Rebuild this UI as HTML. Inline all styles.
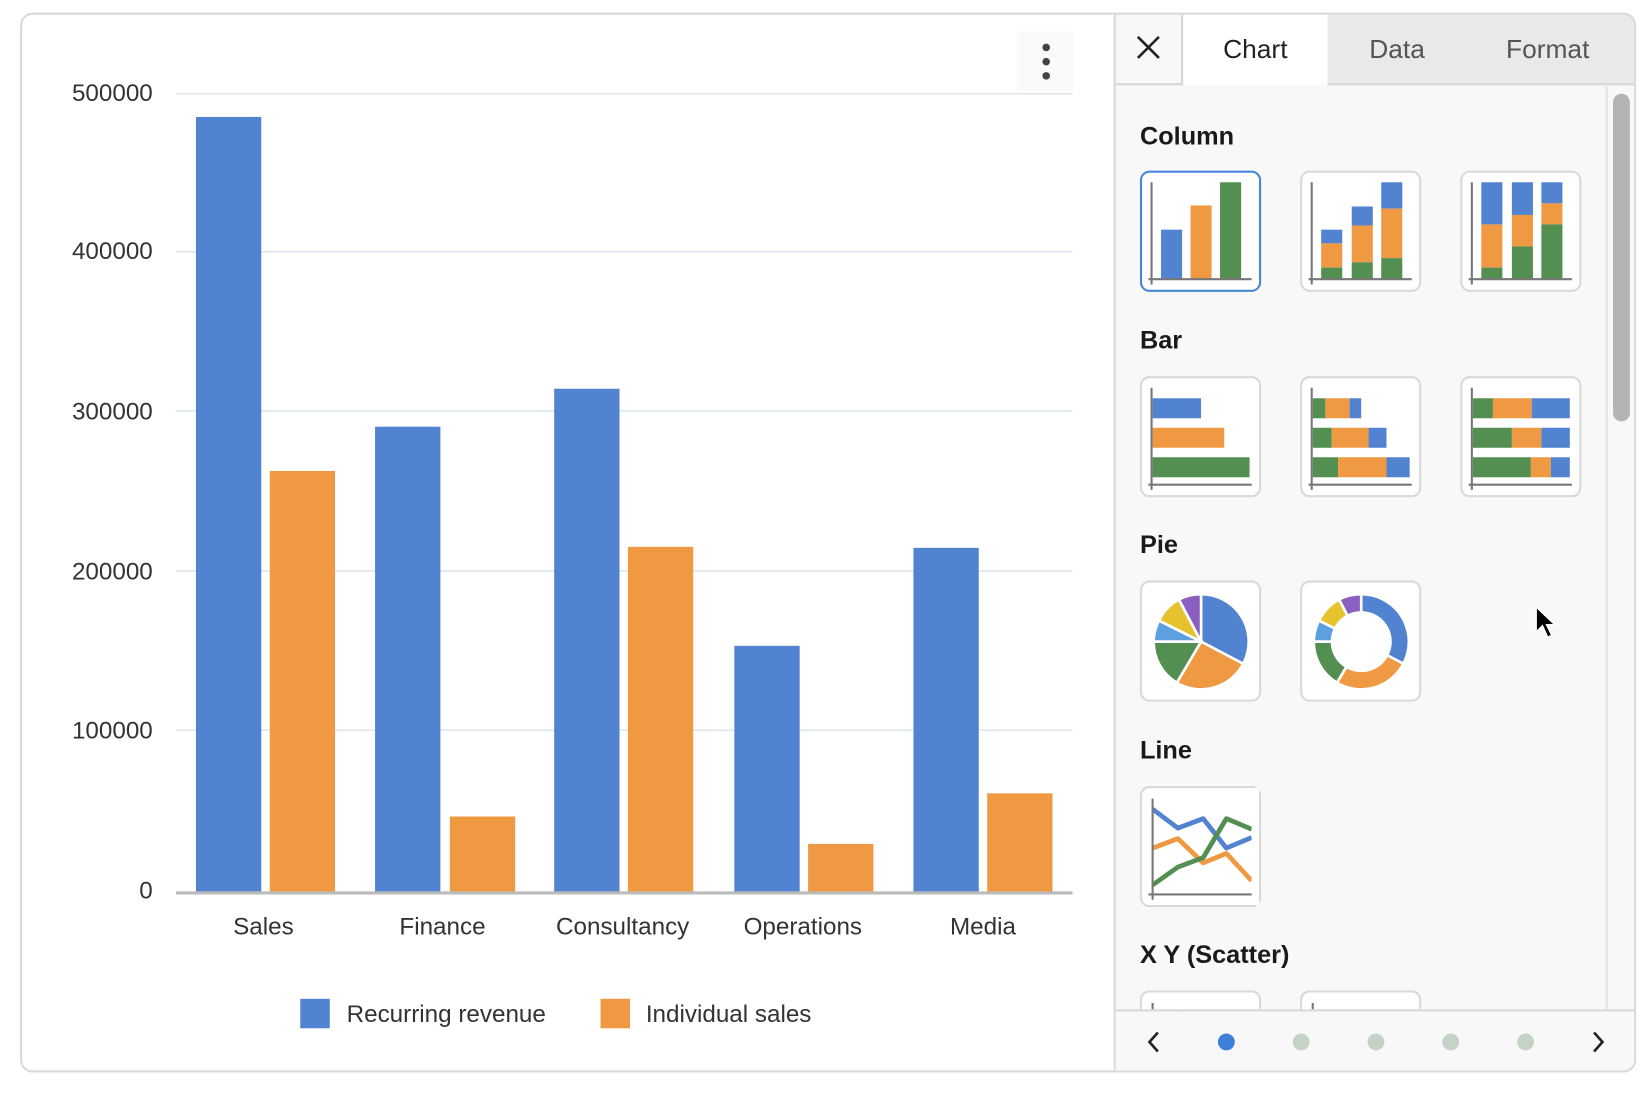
<!DOCTYPE html>
<html><head><meta charset="utf-8"><style>
html,body{margin:0;padding:0;background:#fff;width:1652px;height:1096px;overflow:hidden}
#w{position:absolute;left:0;top:0;width:1568px;height:1040px;transform:scale(1.05357);transform-origin:0 0;font-family:"Liberation Sans",sans-serif}
.card{position:absolute;left:19px;top:12px;width:1530px;height:1002px;border:2px solid #d9d9d9;border-radius:12px;background:#fff;overflow:hidden}
.panel{position:absolute;left:1036px;top:0;width:494px;height:1002px;background:#f8f8f8;border-left:2px solid #d9d9d9}
.tabs{position:absolute;left:0;top:0;width:494px;height:66px;}
.tab{position:absolute;top:0;height:65px;line-height:66px;font-size:25px;color:#555;text-align:center}
.sect{position:absolute;left:23px;font-size:24px;font-weight:bold;color:#1a1a1a}
.th{position:absolute;width:111px;height:111px;background:#fff;border:2px solid #d9d9d9;border-radius:9px;box-sizing:content-box}
.th svg{position:absolute;left:0;top:0}
.dot{position:absolute;top:967px;width:16px;height:16px;border-radius:50%;background:#c5d3c7}
</style></head><body><div id="w">
<div class="card">
<svg width="1040" height="1002" style="position:absolute;left:-21px;top:-14px" font-family="Liberation Sans, sans-serif">
<g stroke="#dde6ee" stroke-width="1.5">
<line x1="167" y1="89" x2="1018" y2="89"/><line x1="167" y1="239" x2="1018" y2="239"/><line x1="167" y1="390" x2="1018" y2="390"/><line x1="167" y1="542" x2="1018" y2="542"/><line x1="167" y1="693" x2="1018" y2="693"/>
</g>
<g font-size="23" fill="#333" text-anchor="end">
<text x="145" y="96">500000</text><text x="145" y="246">400000</text><text x="145" y="398">300000</text><text x="145" y="550">200000</text><text x="145" y="701">100000</text><text x="145" y="853">0</text>
</g>
<g fill="#5183d0">
<rect x="186" y="111" width="62" height="736"/><rect x="356" y="405" width="62" height="442"/><rect x="526" y="369" width="62" height="478"/><rect x="697" y="613" width="62" height="234"/><rect x="867" y="520" width="62" height="327"/>
</g>
<g fill="#ef9a43">
<rect x="256" y="447" width="62" height="400"/><rect x="427" y="775" width="62" height="72"/><rect x="596" y="519" width="62" height="328"/><rect x="767" y="801" width="62" height="46"/><rect x="937" y="753" width="62" height="94"/>
</g>
<line x1="167" y1="847.5" x2="1018" y2="847.5" stroke="#bbb" stroke-width="3"/>
<g font-size="23" fill="#333" text-anchor="middle">
<text x="250" y="887">Sales</text><text x="420" y="887">Finance</text><text x="591" y="887">Consultancy</text><text x="762" y="887">Operations</text><text x="933" y="887">Media</text>
</g>
<rect x="285" y="948" width="28" height="28" fill="#5183d0"/><text x="329" y="970" font-size="23" fill="#333">Recurring revenue</text>
<rect x="570" y="948" width="28" height="28" fill="#ef9a43"/><text x="613" y="970" font-size="23" fill="#333">Individual sales</text>
<rect x="965" y="30" width="54" height="56" fill="#fafafa"/>
<circle cx="993" cy="45" r="3.6" fill="#444"/><circle cx="993" cy="58.5" r="3.6" fill="#444"/><circle cx="993" cy="72" r="3.6" fill="#444"/>
</svg>
<div class="panel">
<div class="tabs">
<svg width="60" height="66" style="position:absolute;left:0;top:0"><path d="M21 21L41 41M41 21L21 41" stroke="#222" stroke-width="2.5"/></svg>
<div class="tab" style="left:62px;width:137px;background:#fff;border-left:2px solid #d6d6d6;border-right:2px solid #d6d6d6;color:#222;height:67px">Chart</div>
<div class="tab" style="left:201px;width:293px;background:#e9e9e9;border-bottom:2px solid #d6d6d6"></div>
<div class="tab" style="left:201px;width:132px">Data</div>
<div class="tab" style="left:340px;width:140px">Format</div>
<div style="position:absolute;left:0;top:65px;width:62px;height:2px;background:#d6d6d6"></div>
</div>
<div style="position:absolute;left:465px;top:68px;width:2px;height:878px;background:#e2e2e2"></div>
<div style="position:absolute;left:472px;top:75px;width:16px;height:311px;border-radius:8px;background:#b3b3b3"></div>
<div class="sect" style="top:102px">Column</div>
<div class="sect" style="top:296px">Bar</div>
<div class="sect" style="top:490px">Pie</div>
<div class="sect" style="top:685px">Line</div>
<div class="sect" style="top:879px">X Y (Scatter)</div>

<div class="th" style="left:23px;top:148px;border-color:#4a86d8">
<svg width="111" height="111"><rect x="18" y="54" width="20" height="47" fill="#5183d0"/><rect x="46" y="31" width="20" height="70" fill="#ef9a43"/><rect x="74" y="9" width="20" height="92" fill="#528f50"/><path d="M9 9V106M6 101H104" stroke="#777" stroke-width="2" fill="none"/></svg></div>
<div class="th" style="left:175px;top:148px">
<svg width="111" height="111"><rect x="18" y="54" width="20" height="13" fill="#5183d0"/><rect x="18" y="67" width="20" height="23" fill="#ef9a43"/><rect x="18" y="90" width="20" height="11" fill="#528f50"/><rect x="47" y="32" width="20" height="18" fill="#5183d0"/><rect x="47" y="50" width="20" height="35" fill="#ef9a43"/><rect x="47" y="85" width="20" height="16" fill="#528f50"/><rect x="75" y="9" width="20" height="25" fill="#5183d0"/><rect x="75" y="34" width="20" height="47" fill="#ef9a43"/><rect x="75" y="81" width="20" height="20" fill="#528f50"/><path d="M9 9V106M6 101H104" stroke="#777" stroke-width="2" fill="none"/></svg></div>
<div class="th" style="left:327px;top:148px">
<svg width="111" height="111"><rect x="18" y="9" width="20" height="40" fill="#5183d0"/><rect x="18" y="49" width="20" height="41" fill="#ef9a43"/><rect x="18" y="90" width="20" height="11" fill="#528f50"/><rect x="47" y="9" width="20" height="31" fill="#5183d0"/><rect x="47" y="40" width="20" height="30" fill="#ef9a43"/><rect x="47" y="70" width="20" height="31" fill="#528f50"/><rect x="75" y="9" width="20" height="20" fill="#5183d0"/><rect x="75" y="29" width="20" height="20" fill="#ef9a43"/><rect x="75" y="49" width="20" height="52" fill="#528f50"/><path d="M9 9V106M6 101H104" stroke="#777" stroke-width="2" fill="none"/></svg></div>

<div class="th" style="left:23px;top:343px">
<svg width="111" height="111"><rect x="10" y="19" width="46" height="19" fill="#5183d0"/><rect x="10" y="47" width="68" height="19" fill="#ef9a43"/><rect x="10" y="75" width="92" height="19" fill="#528f50"/><path d="M9 9V106M6 101H104" stroke="#777" stroke-width="2" fill="none"/></svg></div>
<div class="th" style="left:175px;top:343px">
<svg width="111" height="111"><rect x="10" y="19" width="12" height="19" fill="#528f50"/><rect x="22" y="19" width="23" height="19" fill="#ef9a43"/><rect x="45" y="19" width="11" height="19" fill="#5183d0"/><rect x="10" y="47" width="18" height="19" fill="#528f50"/><rect x="28" y="47" width="35" height="19" fill="#ef9a43"/><rect x="63" y="47" width="17" height="19" fill="#5183d0"/><rect x="10" y="75" width="24" height="19" fill="#528f50"/><rect x="34" y="75" width="46" height="19" fill="#ef9a43"/><rect x="80" y="75" width="22" height="19" fill="#5183d0"/><path d="M9 9V106M6 101H104" stroke="#777" stroke-width="2" fill="none"/></svg></div>
<div class="th" style="left:327px;top:343px">
<svg width="111" height="111"><rect x="10" y="19" width="19" height="19" fill="#528f50"/><rect x="29" y="19" width="37" height="19" fill="#ef9a43"/><rect x="66" y="19" width="36" height="19" fill="#5183d0"/><rect x="10" y="47" width="37" height="19" fill="#528f50"/><rect x="47" y="47" width="28" height="19" fill="#ef9a43"/><rect x="75" y="47" width="27" height="19" fill="#5183d0"/><rect x="10" y="75" width="55" height="19" fill="#528f50"/><rect x="65" y="75" width="19" height="19" fill="#ef9a43"/><rect x="84" y="75" width="18" height="19" fill="#5183d0"/><path d="M9 9V106M6 101H104" stroke="#777" stroke-width="2" fill="none"/></svg></div>

<div class="th" style="left:23px;top:537px">
<svg width="111" height="111"><g stroke="#fff" stroke-width="2.5">
<path d="M56 56L56 11A45 45 0 0 1 96 77Z" fill="#5183d0"/>
<path d="M56 56L96 77A45 45 0 0 1 33 95Z" fill="#ef9a43"/>
<path d="M56 56L33 95A45 45 0 0 1 11 56Z" fill="#528f50"/>
<path d="M56 56L11 56A45 45 0 0 1 16 36Z" fill="#5e9fe0"/>
<path d="M56 56L16 36A45 45 0 0 1 35 16Z" fill="#e6c22e"/>
<path d="M56 56L35 16A45 45 0 0 1 56 11Z" fill="#8a5fbf"/></g></svg></div>
<div class="th" style="left:175px;top:537px">
<svg width="111" height="111"><g stroke="#fff" stroke-width="2.5">
<path d="M56 56L56 11A45 45 0 0 1 96 77Z" fill="#5183d0"/>
<path d="M56 56L96 77A45 45 0 0 1 33 95Z" fill="#ef9a43"/>
<path d="M56 56L33 95A45 45 0 0 1 11 56Z" fill="#528f50"/>
<path d="M56 56L11 56A45 45 0 0 1 16 36Z" fill="#5e9fe0"/>
<path d="M56 56L16 36A45 45 0 0 1 35 16Z" fill="#e6c22e"/>
<path d="M56 56L35 16A45 45 0 0 1 56 11Z" fill="#8a5fbf"/></g><circle cx="56" cy="56" r="29" fill="#fff"/></svg></div>

<div class="th" style="left:23px;top:732px">
<svg width="111" height="111"><g fill="none" stroke-width="4.5" stroke-linejoin="round">
<polyline points="10,20 34,38 58,29 80,57 104,47" stroke="#5183d0"/>
<polyline points="10,57 34,48 58,71 80,62 104,88" stroke="#ef9a43"/>
<polyline points="10,92 34,75 58,66 80,29 104,39" stroke="#528f50"/></g>
<rect x="104" y="0" width="8" height="111" fill="#fff"/>
<path d="M10 10V106M6 101H104" stroke="#777" stroke-width="2" fill="none"/></svg></div>

<div class="th" style="left:23px;top:926px;height:40px"><svg width="111" height="20"><path d="M10 10V20" stroke="#777" stroke-width="2"/><circle cx="36" cy="20" r="4" fill="#5183d0"/></svg></div>
<div class="th" style="left:175px;top:926px;height:40px"><svg width="111" height="20"><path d="M10 10V20" stroke="#777" stroke-width="2"/><circle cx="36" cy="24" r="8" fill="#6fa86d"/></svg></div>

<div style="position:absolute;left:0;top:944px;width:494px;height:58px;background:#f8f8f8;border-top:2px solid #d9d9d9"></div>
<svg width="494" height="58" style="position:absolute;left:0;top:946px"><path d="M40 20L32 29L40 38" stroke="#222" stroke-width="2.5" fill="none"/><path d="M454 20L462 29L454 38" stroke="#222" stroke-width="2.5" fill="none"/></svg>
<div class="dot" style="left:97px;background:#3d7fd9"></div>
<div class="dot" style="left:168px"></div>
<div class="dot" style="left:239px"></div>
<div class="dot" style="left:310px"></div>
<div class="dot" style="left:381px"></div>
<svg width="24" height="36" style="position:absolute;left:397px;top:560px"><path d="M2 2L2 26L8 20L13 31L17 29L12 19L20 19Z" fill="#000" stroke="#fff" stroke-width="1.5"/></svg>
</div>
</div>
</div></body></html>
